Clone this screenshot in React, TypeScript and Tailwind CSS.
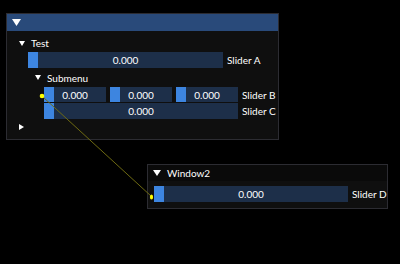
import React from "react";

const FONT = { fontFamily: "Lato, 'Noto Sans', sans-serif" };

function Slider({ w, h = 16 }: { w: number; h?: number }) {
  return (
    <div
      className="relative flex items-center justify-center bg-[#1d2f49] shrink-0"
      style={{ width: w, height: h }}
    >
      <div className="absolute left-0 top-0 bottom-0 w-[10px] bg-[#3d85e0]" />
      <span className="relative text-[10px] leading-none text-white">0.000</span>
    </div>
  );
}

function Down({ w = 6, h = 5 }: { w?: number; h?: number }) {
  return (
    <svg width={w} height={h} viewBox={`0 0 ${w} ${h}`} className="shrink-0">
      <polygon points={`0,0 ${w},0 ${w / 2},${h}`} fill="#fff" />
    </svg>
  );
}

function Right() {
  return (
    <svg width={5} height={6} viewBox="0 0 5 6" className="shrink-0">
      <polygon points="0,0 5,3 0,6" fill="#fff" />
    </svg>
  );
}

export default function App() {
  return (
    <div className="relative w-[400px] h-[264px] bg-black overflow-hidden text-white" style={FONT}>
      {/* Window 1 */}
      <div className="absolute left-[6px] top-[13px] w-[273px] h-[127px] border border-[#2c2c32] bg-[#0f0f0f] flex flex-col">
        <div className="h-[17px] bg-[#294a7a] flex items-center pl-[5px]">
          <Down w={9} h={7} />
        </div>
        <div className="flex flex-col pt-[5px]">
          <div className="h-[14px] flex items-center ml-[12px] gap-[6px]">
            <Down />
            <span className="text-[10px] leading-none">Test</span>
          </div>
          <div className="mt-[2px] flex items-center ml-[21px] gap-[4px]">
            <Slider w={195} />
            <span className="text-[10px] leading-none">Slider A</span>
          </div>
          <div className="h-[15px] mt-[2px] flex items-center ml-[28px] gap-[6px]">
            <Down />
            <span className="text-[10px] leading-none">Submenu</span>
          </div>
          <div className="mt-[2px] flex items-center ml-[37px] gap-[4px]">
            <div className="flex gap-[4px]">
              <Slider w={62} h={15} />
              <Slider w={62} h={15} />
              <Slider w={62} h={15} />
            </div>
            <span className="text-[10px] leading-none">Slider B</span>
          </div>
          <div className="mt-px flex items-center ml-[37px] gap-[4px]">
            <Slider w={194} />
            <span className="text-[10px] leading-none">Slider C</span>
          </div>
          <div className="h-[15px] flex items-center ml-[12px]">
            <Right />
          </div>
        </div>
      </div>

      {/* Window 2 */}
      <div className="absolute left-[147px] top-[164px] w-[241px] h-[45px] border border-[#2c2c32] bg-[#0f0f0f] flex flex-col">
        <div className="h-[16px] bg-[#0a0a0a] flex items-center pl-[5px] gap-[6px]">
          <Down w={8} h={6} />
          <span className="text-[10px] leading-none">Window2</span>
        </div>
        <div className="flex items-center pt-[5px] pl-[6px] gap-[4px]">
          <Slider w={194} />
          <span className="text-[10px] leading-none">Slider D</span>
        </div>
      </div>

      {/* Link overlay */}
      <svg className="absolute left-0 top-0 pointer-events-none" width={400} height={264} viewBox="0 0 400 264">
        <line x1={43} y1={97} x2={151} y2={196} stroke="#6e6a12" strokeWidth={1} />
        <circle cx={42} cy={96} r={2.3} fill="#ffff00" />
        <ellipse cx={151.5} cy={197} rx={1.6} ry={2.6} fill="#ffff00" />
      </svg>
    </div>
  );
}
